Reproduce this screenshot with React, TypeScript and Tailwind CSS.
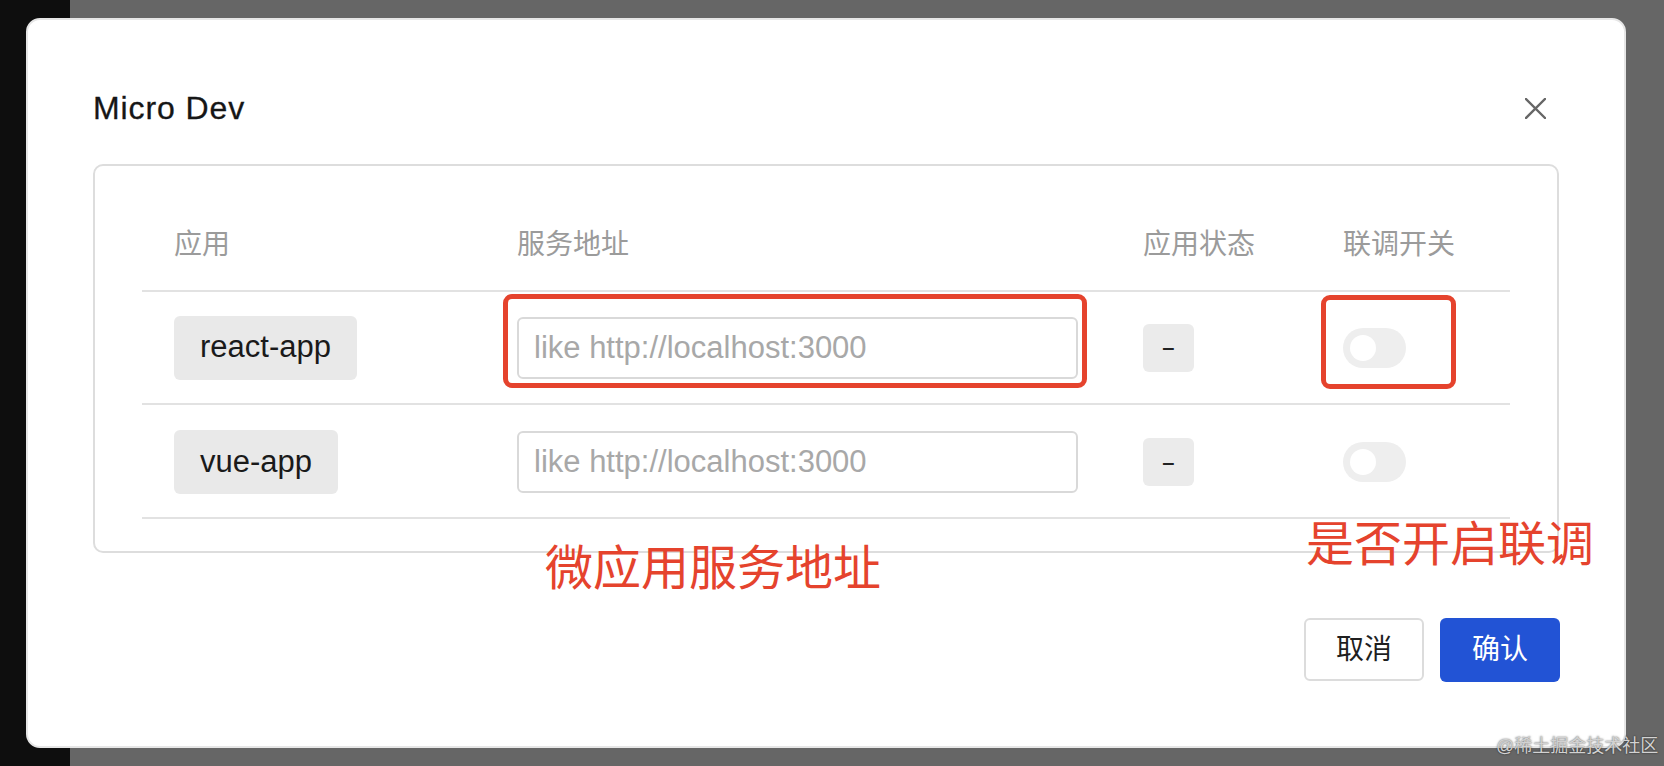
import React from "react";

const apps = ["react-app", "vue-app"];

function Toggle() {
  return (
    <div className="w-[63px] h-[40px] rounded-full bg-[#eeeeee] flex items-center pl-[7px]">
      <div className="w-[26px] h-[26px] rounded-full bg-white" />
    </div>
  );
}

export default function App() {
  return (
    <div className="relative w-[1664px] h-[766px] overflow-hidden bg-[#666666] pt-[18px] pl-[26px] font-['Liberation_Sans','Noto_Sans_CJK_SC',sans-serif]">
      <div className="absolute left-0 top-0 h-full w-[70px] bg-[#0e0e0e]" />

      <div className="relative w-[1600px] h-[730px] rounded-[14px] bg-white border-2 border-[#e6e6e6] pt-[64px] px-[65px]">
        {/* header */}
        <div className="flex h-[48px] items-center justify-between">
          <div className="text-[32px] tracking-[0.9px] text-[#161616] [-webkit-text-stroke:0.3px_#161616]">Micro Dev</div>
          <div className="mr-[13px] w-[21px] h-[21px]">
            <svg width="21" height="21" viewBox="0 0 21 21">
              <path d="M1 1 L20 20 M20 1 L1 20" stroke="#666666" strokeWidth="2.4" strokeLinecap="square" />
            </svg>
          </div>
        </div>

        {/* card */}
        <div className="mt-[32px] rounded-[10px] border-2 border-[#dddddd] pt-[33px] pb-[32px] px-[47px]">
          <div className="grid grid-cols-[343px_626px_200px_1fr] h-[93px] items-center border-b-2 border-[#e2e2e2] text-[28px] text-[#9b9b9b]">
            <div className="pl-[32px]">应用</div>
            <div className="pl-[32px]">服务地址</div>
            <div className="pl-[32px]">应用状态</div>
            <div className="pl-[32px]">联调开关</div>
          </div>
          {apps.map((name, i) => (
            <div
              key={name}
              className={
                i === 0
                  ? "grid grid-cols-[343px_626px_200px_1fr] h-[113px] items-center border-b-2 border-[#e2e2e2]"
                  : "grid grid-cols-[343px_626px_200px_1fr] h-[114px] items-center border-b-2 border-[#e2e2e2] pt-[2px]"
              }
            >
              <div className="pl-[32px]">
                <div className="inline-flex h-[64px] items-center rounded-[6px] bg-[#e9e9e9] px-[26px] text-[31px] text-[#1a1a1a]">
                  {name}
                </div>
              </div>
              <div className="pl-[32px]">
                <input
                  className="w-[561px] h-[62px] rounded-[6px] border-2 border-[#d9d9d9] pl-[15px] text-[31px] text-[#1a1a1a] placeholder:text-[#a8a8a8] outline-none"
                  placeholder="like http://localhost:3000"
                />
              </div>
              <div className="pl-[32px]">
                <div className="flex w-[51px] h-[48px] items-center justify-center rounded-[6px] bg-[#ebebeb] text-[26px] text-[#222222]">
                  <span className="inline-block scale-x-[1.7]">-</span>
                </div>
              </div>
              <div className="pl-[32px]">
                <Toggle />
              </div>
            </div>
          ))}
        </div>

        {/* footer */}
        <div className="mt-[65px] flex justify-end gap-[16px] -mr-[1px]">
          <button className="w-[120px] h-[63px] rounded-[6px] border-2 border-[#dcdcdc] bg-white text-[28px] text-[#1f1f1f]">
            取消
          </button>
          <button className="w-[120px] h-[64px] rounded-[6px] bg-[#2253d5] text-[28px] text-white">
            确认
          </button>
        </div>
      </div>

      {/* annotations */}
      <div className="absolute left-[503px] top-[294px] w-[584px] h-[94px] rounded-[9px] border-[5px] border-[#e5432d]" />
      <div className="absolute left-[1321px] top-[295px] w-[135px] h-[94px] rounded-[9px] border-[5px] border-[#e5432d]" />
      <div className="absolute left-[545px] top-[545px] text-[48px] leading-none text-[#e5432d]">微应用服务地址</div>
      <div className="absolute left-[1306px] top-[521px] text-[48px] leading-none text-[#e5432d]">是否开启联调</div>

      {/* watermark */}
      <div className="absolute left-[1496px] top-[737px] text-[18px] leading-none text-[#d2d2d2] [text-shadow:0_0_2px_rgba(0,0,0,0.7)]">
        @稀土掘金技术社区
      </div>
    </div>
  );
}
